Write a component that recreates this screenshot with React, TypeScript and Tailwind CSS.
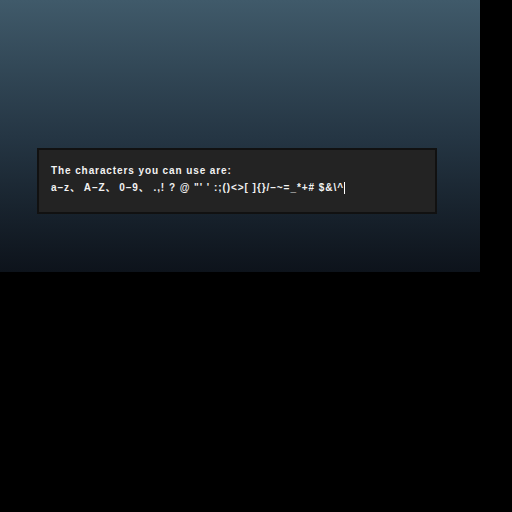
export default function App() {
  return (
    <div className="w-[512px] h-[512px] bg-black">
      <div className="w-[480px] h-[272px] bg-gradient-to-b from-[#405a6a] via-[#253644] to-[#0d131b] pt-[148px] pl-[37px]">
        <div className="w-[400px] h-[66px] bg-[#232323] border-2 border-[#111111] pl-[12px] pt-[12px] text-[#f2f2f2] font-bold text-[10px] leading-[17px]" style={{ fontFamily: '"Liberation Sans", "Noto Sans CJK JP", sans-serif' }}>
          <div className="tracking-[0.9px]">The characters you can use are:</div>
          <div className="flex items-center whitespace-pre tracking-[0.95px]">
            <span>a–z、<span className="tracking-[0px]"> </span>A–Z、<span className="tracking-[0px]"> </span>0–9、 .,! ? @ "' ' :;()&lt;&gt;[ ]{"{}"}/–~=_*+# $&amp;\^</span>
            <span className="inline-block w-[1px] h-[12px] bg-white" />
          </div>
        </div>
      </div>
    </div>
  );
}
